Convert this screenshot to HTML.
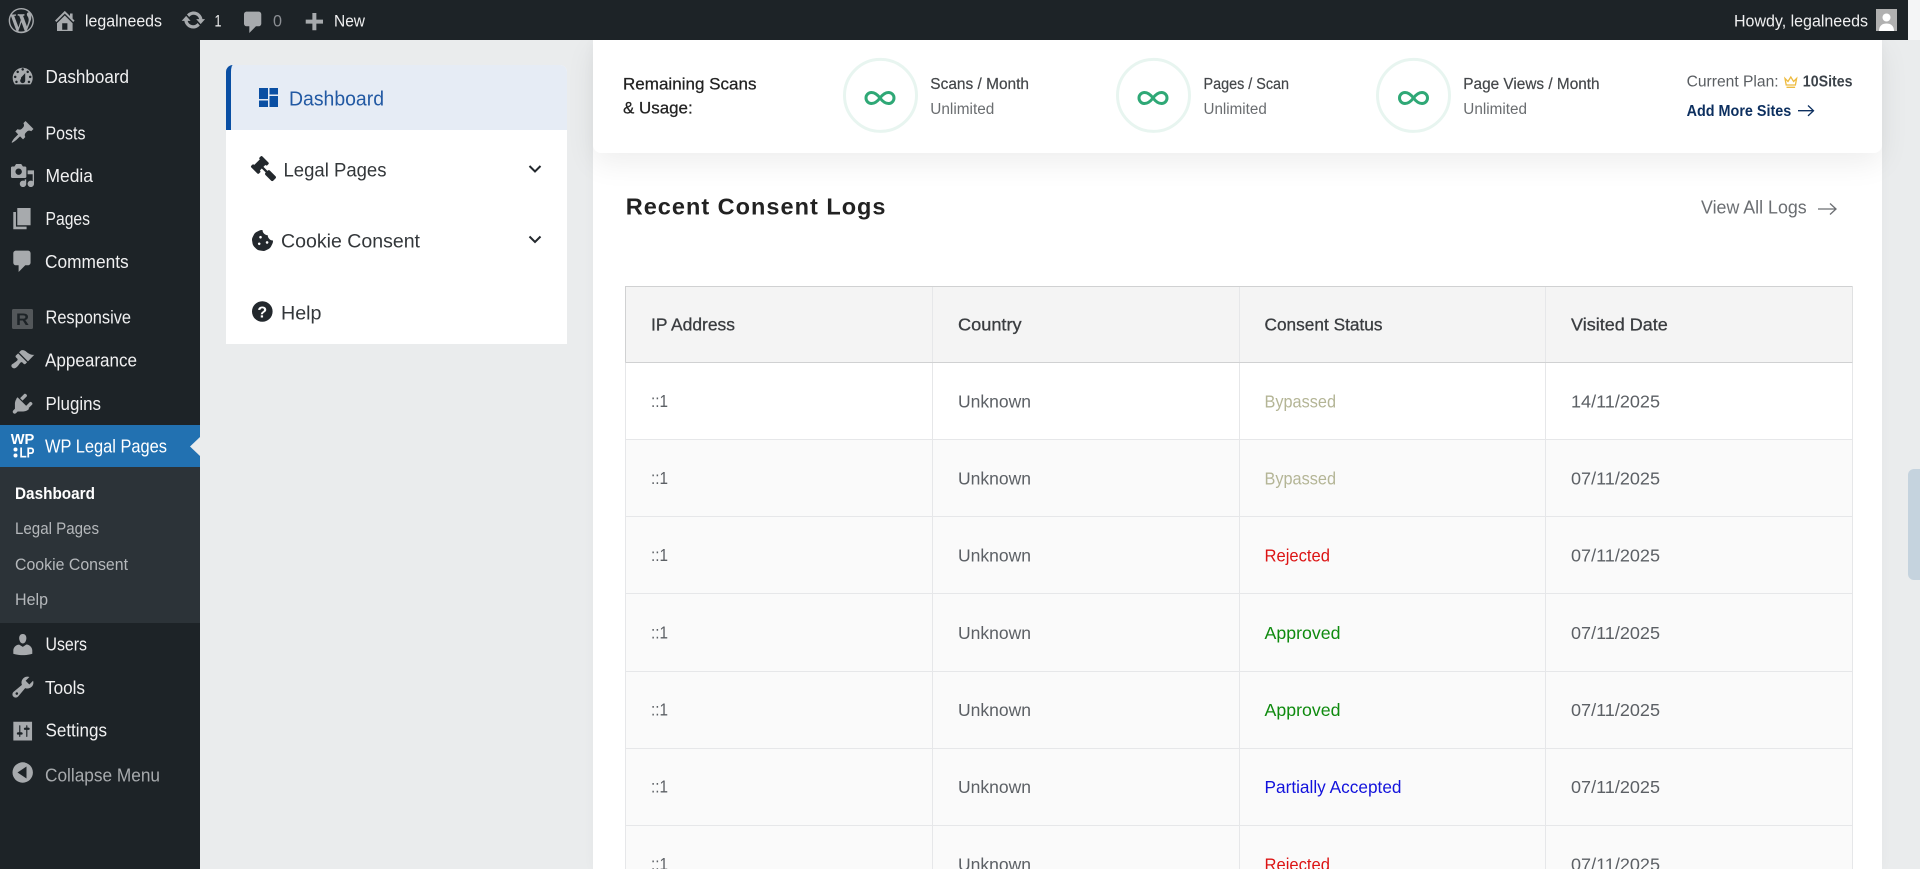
<!DOCTYPE html>
<html lang="en">
<head>
<meta charset="utf-8">
<title>WP Legal Pages Dashboard</title>
<style>
html,body{margin:0;padding:0;width:1920px;height:869px;overflow:hidden;background:#eaeced}
body{position:relative;font-family:"Liberation Sans",sans-serif}
.b{position:absolute}
svg{position:absolute;left:0;top:0}
text{font-family:"Liberation Sans",sans-serif;white-space:pre}
.s{font-size:18px;fill:#f0f0f1}
.t{font-size:16.500px;fill:#f0f0f1}
.c{font-size:17.500px;fill:#5c6065}
.h{font-size:17.500px;fill:#3a3d40;stroke:#3a3d40;stroke-width:.3px}
.n{font-size:19px;fill:#33373a}
.l{font-size:15.500px;fill:#44474a;stroke:#44474a;stroke-width:.2px}
.u{font-size:15.500px;fill:#6a6d70}
.k{font-size:17px;fill:#222;stroke:#222;stroke-width:.25px}
.i{fill:#a7aaad}
</style>
</head>
<body>
<div class="b" style="left:0;top:0;width:1908px;height:40px;background:#1d2327;z-index:3"></div>
<div class="b" style="left:1908px;top:0;width:12px;height:40px;background:#f4f5f6"></div>
<div class="b" style="left:0;top:40px;width:200px;height:829px;background:#1d2327"></div>
<div class="b" style="left:0;top:425px;width:200px;height:42px;background:#2271b1"></div>
<div class="b" style="left:0;top:467px;width:200px;height:156px;background:#2c3338"></div>
<div class="b" style="left:226px;top:65px;width:341px;height:279px;background:#fff;border-radius:7px 7px 0 0"></div>
<div class="b" style="left:226px;top:65px;width:336px;height:65px;background:#e6ecf5;border-left:5px solid #0a4fa3;border-radius:7px 7px 0 0"></div>
<div class="b" style="left:593px;top:40px;width:1289px;height:829px;background:#fff;box-shadow:0 0 12px rgba(0,0,0,.03)"></div>
<div class="b" style="left:593px;top:40px;width:1289px;height:113px;background:#fff;border-radius:0 0 8px 8px;box-shadow:0 10px 30px rgba(0,0,0,.07)"></div>
<div class="b" style="left:1908px;top:469px;width:12px;height:111px;background:#c5d3de;border-radius:6px 0 0 6px"></div>

<svg width="1920" height="869" viewBox="0 0 1920 869" style="z-index:4">
<!-- active menu arrow -->
<path d="M200 437l-10 9.500 10 9.500z" fill="#eaeced"/>

<!-- admin bar -->
<g class="i">
<path transform="translate(8.700 8) scale(1.260)" fill-rule="evenodd" d="M20 10c0-5.510-4.490-10-10-10C4.480 0 0 4.490 0 10c0 5.520 4.480 10 10 10 5.510 0 10-4.480 10-10zM7.780 15.370L4.370 6.220c.55-.02 1.170-.08 1.170-.08.5-.06.44-1.130-.06-1.110 0 0-1.450.11-2.370.11-.18 0-.37 0-.58-.01C4.120 2.690 6.870 1.090 10 1.090c2.330 0 4.450.87 6.050 2.340-.68-.11-1.650.39-1.650 1.580 0 .74.45 1.360.9 2.100.35.61.55 1.360.55 2.460 0 1.490-1.400 5-1.400 5l-3.030-8.350c.54-.02.82-.17.82-.17.5-.05.44-1.250-.06-1.220 0 0-1.440.12-2.380.12-.87 0-2.330-.12-2.330-.12-.5-.03-.56 1.200-.06 1.220l.92.08 1.260 3.410zM17.410 10c.24-.64.74-1.870.43-4.250.7 1.290 1.050 2.710 1.050 4.250 0 3.290-1.730 6.240-4.400 7.780.97-2.590 1.940-5.200 2.920-7.780zM6.100 18.090C3.120 16.650 1.110 13.530 1.110 10c0-1.300.23-2.480.72-3.590C3.250 10.300 4.670 14.200 6.100 18.090zm4.030-6.860l2.580 6.980c-.86.29-1.740.45-2.710.45-.82 0-1.620-.12-2.370-.34.85-2.380 1.670-4.740 2.500-7.090z"/>
<path transform="translate(51.800 7.600) scale(1.300)" fill-rule="evenodd" d="M16 8.500l1.530 1.530-1.060 1.060L10 4.620l-6.470 6.470-1.060-1.060L10 2.500l4 4v-2h2v4zm-6-2.460l6 5.990V18H4v-5.970zM12 17v-5H8v5h4z"/>
<path transform="translate(180.700 7.300) scale(1.270)" d="M10.200 3.280c3.530 0 6.430 2.610 6.920 6h2.080l-3.500 4-3.500-4h2.320c-.45-1.970-2.210-3.440-4.320-3.440-1.450 0-2.730.71-3.540 1.780L4.950 5.660C6.230 4.200 8.110 3.280 10.200 3.280zm-.4 13.440c-3.520 0-6.430-2.610-6.920-6H.8l3.500-4c1.170 1.330 2.330 2.670 3.500 4H5.480c.45 1.970 2.210 3.440 4.320 3.440 1.450 0 2.730-.71 3.540-1.780l1.710 1.950c-1.280 1.460-3.150 2.390-5.250 2.390z"/>
<path transform="translate(240 9) scale(1.330)" d="M5 2h9c1.100 0 2 .9 2 2v7c0 1.100-.9 2-2 2h-2l-5 5v-5H5c-1.100 0-2-.9-2-2V4c0-1.100.9-2 2-2z"/>
<path transform="translate(300.400 10.300) scale(1.330)" d="M17 7v3h-5v5H9v-5H4V7h5V2h3v5h5z"/>
</g>
<text class="t" x="85" y="26.500" textLength="77" lengthAdjust="spacingAndGlyphs">legalneeds</text>
<text class="t" x="214.500" y="26.500" textLength="7" lengthAdjust="spacingAndGlyphs">1</text>
<text class="t" x="273" y="26.500" style="fill:#8c8f94" textLength="9" lengthAdjust="spacingAndGlyphs">0</text>
<text class="t" x="334" y="26.500" textLength="31" lengthAdjust="spacingAndGlyphs">New</text>
<text class="t" x="1734" y="26.500" textLength="134" lengthAdjust="spacingAndGlyphs">Howdy, legalneeds</text>
<rect x="1876" y="9" width="21" height="22" fill="#b0b0b0"/>
<circle cx="1886.500" cy="17.500" r="4" fill="#fff"/>
<path d="M1879 31c0-5.500 3.500-7.500 7.500-7.500s7.500 2 7.500 7.500z" fill="#fff"/>

<!-- sidebar icons -->
<g class="i">
<path transform="translate(10.200 64.400) scale(1.250)" fill-rule="evenodd" d="M3.760 16h12.480c1.100-1.430 1.760-3.210 1.760-5.140 0-4.520-3.580-8.180-8-8.180s-8 3.660-8 8.180c0 1.930.66 3.710 1.760 5.140zM10 3c.55 0 1 .45 1 1s-.45 1-1 1-1-.45-1-1 .45-1 1-1zM6 5c.55 0 1 .45 1 1s-.45 1-1 1-1-.45-1-1 .45-1 1-1zm8 0c.55 0 1 .45 1 1s-.45 1-1 1-1-.45-1-1 .45-1 1-1zm-5.370 5.550L12 7v6c0 1.100-.9 2-2 2s-2-.9-2-2c0-.57.25-1.080.63-1.450zM4 9c.55 0 1 .45 1 1s-.45 1-1 1-1-.45-1-1 .45-1 1-1zm12 0c.55 0 1 .45 1 1s-.45 1-1 1-1-.45-1-1 .45-1 1-1zM5 13c.55 0 1 .45 1 1s-.45 1-1 1-1-.45-1-1 .45-1 1-1zm10 0c.55 0 1 .45 1 1s-.45 1-1 1-1-.45-1-1 .45-1 1-1z"/>
<path transform="translate(10.200 119.500) scale(1.250)" d="M10.440 3.020l1.820-1.820 6.360 6.350-1.830 1.820c-1.050-.68-2.480-.57-3.410.35l-.92.92c-.93.92-1.040 2.350-.35 3.400l-1.830 1.820-2.410-2.410-2.800 2.790c-.42.42-3.380 2.710-3.800 2.290s1.860-3.390 2.280-3.810l2.790-2.790L4.100 9.510l1.830-1.810c1.050.69 2.480.57 3.400-.35l.92-.92c.93-.92 1.040-2.350.35-3.410z"/>
<path transform="translate(9.700 162.700) scale(1.280)" fill-rule="evenodd" d="M13 11V4c0-.55-.45-1-1-1h-1.670L9 1H5L3.670 3H2c-.55 0-1 .45-1 1v7c0 .55.45 1 1 1h10c.55 0 1-.45 1-1zM7 4.500c1.380 0 2.500 1.120 2.500 2.500S8.380 9.500 7 9.500 4.500 8.380 4.500 7 5.620 4.500 7 4.500zM14 6h5v10.500c0 1.380-1.120 2.500-2.500 2.500S14 17.880 14 16.500s1.120-2.500 2.500-2.500c.54 0 1.040.17 1.450.46V9h-3.950zM8 13h4.900v3.500c0 1.380-1.120 2.500-2.500 2.500S7.900 17.880 7.900 16.500 9 14 10.400 14c.54 0 1 .17 1.300.4V13z"/>
<path transform="translate(9.300 205.300) scale(1.330)" d="M6 15V2h10v13H6zm-1 1h8v2H3V5h2v11z"/>
<path transform="translate(9.300 248) scale(1.330)" d="M5 2h9c1.100 0 2 .9 2 2v7c0 1.100-.9 2-2 2h-2l-5 5v-5H5c-1.100 0-2-.9-2-2V4c0-1.100.9-2 2-2z"/>
<path transform="translate(9.700 347.400) scale(1.260)" d="M14.480 11.060L7.410 3.990l1.500-1.500c.5-.56 2.300-.47 3.510.32 1.210.8 1.430 1.280 2.910 2.100 1.180.64 2.450 1.260 4.230.91zm-.71.71L6.700 4.700 4.930 6.470c-.39.39-.39 1.020 0 1.410l1.060 1.060c.39.39.39 1.030 0 1.420-.6.6-1.430 1.110-2.210 1.690-.35.26-.7.53-1.010.84C1.430 13.230.76 14.780 2 16c1.230 1.230 2.770.56 4.120-.8.3-.3.58-.65.84-1 .58-.78 1.090-1.610 1.690-2.210.39-.39 1.030-.39 1.420 0l1.060 1.060c.39.39 1.020.39 1.410 0z"/>
<path transform="translate(9.700 390.700) scale(1.300)" d="M13.110 4.360L9.870 7.600 8 5.730l3.240-3.240c.35-.34 1.050-.2 1.560.32.52.51.66 1.210.31 1.550zm-8 1.770l.91-1.120 9.010 9.010-1.190.84c-.71.71-2.630 1.160-3.820 1.160H6.140L4.900 17.260c-.59.59-1.540.59-2.120 0-.59-.58-.59-1.530 0-2.120l1.240-1.240v-3.880c0-1.130.52-3.010 1.180-3.680zm7.110 5.880l3.240-3.240c.35-.34 1.050-.2 1.560.32.51.51.66 1.210.31 1.550l-3.240 3.250z"/>
<path transform="translate(9.700 631.400) scale(1.310)" d="M10 9.250c-2.270 0-2.730-3.440-2.730-3.440C7 4.020 7.820 2 9.970 2c2.160 0 2.980 2.020 2.710 3.810 0 0-.41 3.440-2.680 3.440zm0 2.570L12.720 10c2.390 0 4.520 2.330 4.520 4.530v2.490s-3.650 1.130-7.240 1.130c-3.650 0-7.240-1.130-7.240-1.130v-2.490c0-2.250 1.940-4.480 4.470-4.480z"/>
<path transform="translate(9.800 674) scale(1.310)" fill-rule="evenodd" d="M16.680 9.770c-1.340 1.340-3.300 1.670-4.950.99l-5.410 6.520c-.99.99-2.590.99-3.570 0-.99-.98-.99-2.580 0-3.570l6.520-5.420c-.68-1.650-.35-3.610.99-4.950 1.280-1.280 3.120-1.620 4.720-1.060l-2.890 2.890 2.820 2.820 2.860-2.870c.53 1.580.18 3.390-1.090 4.650zM4.660 15.640c.39.39 1 .39 1.390 0 .39-.39.39-1 0-1.390-.39-.39-1-.39-1.390 0-.39.39-.39 1 0 1.390z"/>
<path transform="translate(11 719.400) scale(1.170)" fill-rule="evenodd" d="M18 18V2H2v16zM8 11h1c.55 0 1 .45 1 1s-.45 1-1 1H8v1.500c0 .28-.22.5-.5.5s-.5-.22-.5-.5V13H6c-.55 0-1-.45-1-1s.45-1 1-1h1V5.500c0-.28.22-.5.5-.5s.5.22.5.5V11zm5-2h-1c-.55 0-1-.45-1-1s.45-1 1-1h1V5.500c0-.28.22-.5.5-.5s.5.22.5.5V7h1c.55 0 1 .45 1 1s-.45 1-1 1h-1v5.500c0 .28-.22.5-.5.5s-.5-.22-.5-.5V9z"/>
<circle cx="22.700" cy="772.500" r="10.200"/>
</g>
<path d="M26.500 766.500v12l-9-6z" fill="#1d2327"/>
<rect x="12" y="309" width="21" height="20" rx="1.500" fill="#53575a"/>
<text x="16" y="325" font-size="17" font-weight="700" fill="#1d2327" textLength="13" lengthAdjust="spacingAndGlyphs">R</text>
<text x="10.700" y="444" font-size="15" font-weight="700" fill="#fff" textLength="23.600" lengthAdjust="spacingAndGlyphs">WP</text>
<text x="19.500" y="457.500" font-size="15" font-weight="700" fill="#fff" textLength="15" lengthAdjust="spacingAndGlyphs">LP</text>
<circle cx="15.500" cy="449.500" r="2" fill="#fff"/><circle cx="15.500" cy="455.500" r="2" fill="#fff"/>

<!-- sidebar labels -->
<text class="s" x="45.500" y="83" textLength="83.500" lengthAdjust="spacingAndGlyphs">Dashboard</text>
<text class="s" x="45.500" y="139.500" textLength="40" lengthAdjust="spacingAndGlyphs">Posts</text>
<text class="s" x="45.500" y="182" textLength="47.500" lengthAdjust="spacingAndGlyphs">Media</text>
<text class="s" x="45.500" y="225" textLength="44.500" lengthAdjust="spacingAndGlyphs">Pages</text>
<text class="s" x="45" y="268" textLength="83.700" lengthAdjust="spacingAndGlyphs">Comments</text>
<text class="s" x="45.500" y="323.500" textLength="85.500" lengthAdjust="spacingAndGlyphs">Responsive</text>
<text class="s" x="45" y="366.600" textLength="92" lengthAdjust="spacingAndGlyphs">Appearance</text>
<text class="s" x="45.500" y="410" textLength="55.500" lengthAdjust="spacingAndGlyphs">Plugins</text>
<text class="s" x="45" y="452.700" style="fill:#fff" textLength="122" lengthAdjust="spacingAndGlyphs">WP Legal Pages</text>
<text class="t" x="15" y="499" style="fill:#fff;font-weight:700" textLength="80" lengthAdjust="spacingAndGlyphs">Dashboard</text>
<text class="t" x="15" y="534" style="fill:#b5b8bb" textLength="84" lengthAdjust="spacingAndGlyphs">Legal Pages</text>
<text class="t" x="15" y="570" style="fill:#b5b8bb" textLength="113" lengthAdjust="spacingAndGlyphs">Cookie Consent</text>
<text class="t" x="15" y="605" style="fill:#b5b8bb" textLength="33" lengthAdjust="spacingAndGlyphs">Help</text>
<text class="s" x="45.500" y="650.700" textLength="41.500" lengthAdjust="spacingAndGlyphs">Users</text>
<text class="s" x="45" y="694" textLength="40" lengthAdjust="spacingAndGlyphs">Tools</text>
<text class="s" x="45.500" y="736.700" textLength="61.500" lengthAdjust="spacingAndGlyphs">Settings</text>
<text class="s" x="45" y="781.700" style="fill:#a7aaad" textLength="115" lengthAdjust="spacingAndGlyphs">Collapse Menu</text>

<!-- plugin nav -->
<g fill="#0a4fa3">
<rect x="259" y="88" width="9" height="11"/><rect x="259" y="100.500" width="9" height="6.500"/>
<rect x="269.500" y="88" width="8.500" height="6.500"/><rect x="269.500" y="96" width="8.500" height="11"/>
</g>
<text x="289" y="105.700" font-size="20" fill="#2259a3" textLength="95" lengthAdjust="spacingAndGlyphs">Dashboard</text>
<g fill="#23282d">
<path transform="translate(276 156) scale(-.049 .049)" d="M504.971 199.362l-22.627-22.627c-9.373-9.373-24.569-9.373-33.941 0l-5.657 5.657L329.608 69.255l5.657-5.657c9.373-9.373 9.373-24.569 0-33.941L312.638 7.029c-9.373-9.373-24.569-9.373-33.941 0L154.246 131.480c-9.373 9.373-9.373 24.569 0 33.941l22.627 22.627c9.373 9.373 24.569 9.373 33.941 0l5.657-5.657 39.598 39.598-81.040 81.040-5.657-5.657c-12.497-12.497-32.758-12.497-45.255 0L9.373 412.118c-12.497 12.497-12.497 32.758 0 45.255l45.255 45.255c12.497 12.497 32.758 12.497 45.255 0l114.745-114.745c12.497-12.497 12.497-32.758 0-45.255l-5.657-5.657 81.040-81.040 39.598 39.598-5.657 5.657c-9.373 9.373-9.373 24.569 0 33.941l22.627 22.627c9.373 9.373 24.569 9.373 33.941 0l124.451-124.451c9.372-9.372 9.372-24.568 0-33.941z"/>
<path transform="translate(252 230) scale(.041)" fill-rule="evenodd" d="M510.520 255.820c-69.970-.85-126.470-57.690-126.470-127.860-70.170 0-127-56.490-127.860-126.450-27.260-4.140-55.130.3-79.720 12.820l-69.130 35.220a132.221 132.221 0 0 0-57.790 57.810l-35.100 68.880a132.645 132.645 0 0 0-12.820 80.950l12.080 76.270a132.521 132.521 0 0 0 37.160 72.960l54.770 54.760a132.036 132.036 0 0 0 72.710 37.060l76.710 12.150c27.510 4.360 55.700-.11 80.530-12.760l69.130-35.210a132.273 132.273 0 0 0 57.790-57.810l35.100-68.880c12.560-24.640 17.010-52.580 12.910-79.910zM176 368c-17.670 0-32-14.330-32-32s14.330-32 32-32 32 14.330 32 32-14.330 32-32 32zm32-160c-17.670 0-32-14.330-32-32s14.330-32 32-32 32 14.330 32 32-14.330 32-32 32zm160 128c-17.670 0-32-14.330-32-32s14.330-32 32-32 32 14.330 32 32-14.330 32-32 32z"/>
<circle cx="262.300" cy="311.500" r="10.300"/>
</g>
<text x="262.300" y="317.500" font-size="16" font-weight="700" fill="#fff" text-anchor="middle">?</text>
<text class="n" x="283.500" y="176.700" textLength="103" lengthAdjust="spacingAndGlyphs">Legal Pages</text>
<text class="n" x="281" y="247.700" textLength="139" lengthAdjust="spacingAndGlyphs">Cookie Consent</text>
<text class="n" x="281" y="319.300" textLength="40.500" lengthAdjust="spacingAndGlyphs">Help</text>
<path d="M529.500 166l5.500 5.500 5.500-5.500M529.500 236.500l5.500 5.500 5.500-5.500" fill="none" stroke="#23282d" stroke-width="2"/>

<!-- usage card -->
<text class="k" x="623" y="89.700" textLength="133.500" lengthAdjust="spacingAndGlyphs">Remaining Scans</text>
<text class="k" x="623" y="113.700" textLength="69.700" lengthAdjust="spacingAndGlyphs">&amp; Usage:</text>
<g fill="none" stroke="#e8f5f0" stroke-width="3">
<circle cx="880.500" cy="95.400" r="36"/><circle cx="1153.500" cy="95.400" r="36"/><circle cx="1413.500" cy="95.400" r="36"/>
</g>
<g fill="none" stroke="#2fa876" stroke-width="3">
<path d="M880 98c-3-4-5.500-5.500-8.500-5.500a5.500 5.500 0 0 0 0 11c3 0 5.500-1.500 8.500-5.500s5.500-5.500 8.500-5.500a5.500 5.500 0 0 1 0 11c-3 0-5.500-1.500-8.500-5.500z"/>
<path d="M1153 98c-3-4-5.500-5.500-8.500-5.500a5.500 5.500 0 0 0 0 11c3 0 5.500-1.500 8.500-5.500s5.500-5.500 8.500-5.500a5.500 5.500 0 0 1 0 11c-3 0-5.500-1.500-8.500-5.500z"/>
<path d="M1413.500 98c-3-4-5.500-5.500-8.500-5.500a5.500 5.500 0 0 0 0 11c3 0 5.500-1.500 8.500-5.500s5.500-5.500 8.500-5.500a5.500 5.500 0 0 1 0 11c-3 0-5.500-1.500-8.500-5.500z"/>
</g>
<text class="l" x="930.300" y="89" textLength="98.700" lengthAdjust="spacingAndGlyphs">Scans / Month</text>
<text class="u" x="930.300" y="114" textLength="64" lengthAdjust="spacingAndGlyphs">Unlimited</text>
<text class="l" x="1203.500" y="89" textLength="85.500" lengthAdjust="spacingAndGlyphs">Pages / Scan</text>
<text class="u" x="1203.500" y="114" textLength="63.300" lengthAdjust="spacingAndGlyphs">Unlimited</text>
<text class="l" x="1463.300" y="89" textLength="136.300" lengthAdjust="spacingAndGlyphs">Page Views / Month</text>
<text class="u" x="1463.300" y="114" textLength="63.700" lengthAdjust="spacingAndGlyphs">Unlimited</text>
<text x="1686.600" y="86.500" font-size="15.500" fill="#5a5e62" textLength="92" lengthAdjust="spacingAndGlyphs">Current Plan:</text>
<path d="M1785 78.500l3 3 2.800-4.500 2.800 4.500 3-3-1.200 6.500h-9.200zM1786.500 87.300h8.600" fill="none" stroke="#eebb3f" stroke-width="1.300"/>
<text x="1802.800" y="86.500" font-size="15.500" font-weight="700" fill="#3c434a" textLength="49.800" lengthAdjust="spacingAndGlyphs">10Sites</text>
<text x="1686.600" y="116" font-size="15.500" font-weight="700" fill="#0c2f5f" textLength="104.700" lengthAdjust="spacingAndGlyphs">Add More Sites</text>
<path d="M1798 110.700h15M1808 105.500l5.500 5.200-5.500 5.200" fill="none" stroke="#0c2f5f" stroke-width="1.300"/>

<!-- logs heading -->
<text x="625.700" y="214.300" font-size="23.500" font-weight="700" fill="#222" textLength="259.800" lengthAdjust="spacing">Recent Consent Logs</text>
<text x="1701" y="213.300" font-size="18.500" fill="#6b6e72" textLength="105.700" lengthAdjust="spacingAndGlyphs">View All Logs</text>
<path d="M1818 209h18M1830 203.500l6 5.500-6 5.500" fill="none" stroke="#6b6e72" stroke-width="1.300"/>

<!-- table -->
<rect x="625.500" y="286.500" width="1227" height="76" fill="#f4f4f4"/>
<rect x="625.500" y="439.500" width="1227" height="430" fill="#fafafa"/>
<g stroke="#e6e7e9" stroke-width="1" fill="none">
<path d="M932.500 286v583M1239.500 286v583M1545.500 286v583M1852.500 362v507M625.500 362v507"/>
<path d="M625 439.500h1228M625 516.500h1228M625 593.500h1228M625 671.500h1228M625 748.500h1228M625 825.500h1228"/>
</g>
<path d="M625.500 362.500v-76h1227M625.500 362.500h1227" fill="none" stroke="#d0d1d2" stroke-width="1"/>
<path d="M1852.500 286v76" stroke="#e0e1e2" stroke-width="1"/>

<g transform="translate(0 -.7)">
<text class="h" x="651" y="331" textLength="84" lengthAdjust="spacingAndGlyphs">IP Address</text>
<text class="h" x="958" y="331" textLength="63.600" lengthAdjust="spacingAndGlyphs">Country</text>
<text class="h" x="1264.500" y="331" textLength="118" lengthAdjust="spacingAndGlyphs">Consent Status</text>
<text class="h" x="1571" y="331" textLength="96.800" lengthAdjust="spacingAndGlyphs">Visited Date</text>

<text class="c" x="651" y="407.500" textLength="17" lengthAdjust="spacingAndGlyphs">::1</text>
<text class="c" x="958" y="408" textLength="73" lengthAdjust="spacingAndGlyphs">Unknown</text>
<text class="c" x="1264.500" y="408" style="fill:#b4b596" textLength="71.500" lengthAdjust="spacingAndGlyphs">Bypassed</text>
<text class="c" x="1571" y="408" textLength="89" lengthAdjust="spacingAndGlyphs">14/11/2025</text>

<text class="c" x="651" y="484.700" textLength="17" lengthAdjust="spacingAndGlyphs">::1</text>
<text class="c" x="958" y="485.200" textLength="73" lengthAdjust="spacingAndGlyphs">Unknown</text>
<text class="c" x="1264.500" y="485.200" style="fill:#b4b596" textLength="71.500" lengthAdjust="spacingAndGlyphs">Bypassed</text>
<text class="c" x="1571" y="485.200" textLength="89" lengthAdjust="spacingAndGlyphs">07/11/2025</text>

<text class="c" x="651" y="561.800" textLength="17" lengthAdjust="spacingAndGlyphs">::1</text>
<text class="c" x="958" y="562.300" textLength="73" lengthAdjust="spacingAndGlyphs">Unknown</text>
<text class="c" x="1264.500" y="562.300" style="fill:#dc1414" textLength="65.500" lengthAdjust="spacingAndGlyphs">Rejected</text>
<text class="c" x="1571" y="562.300" textLength="89" lengthAdjust="spacingAndGlyphs">07/11/2025</text>

<text class="c" x="651" y="639" textLength="17" lengthAdjust="spacingAndGlyphs">::1</text>
<text class="c" x="958" y="639.500" textLength="73" lengthAdjust="spacingAndGlyphs">Unknown</text>
<text class="c" x="1264.500" y="639.500" style="fill:#0e8a0e" textLength="76" lengthAdjust="spacingAndGlyphs">Approved</text>
<text class="c" x="1571" y="639.500" textLength="89" lengthAdjust="spacingAndGlyphs">07/11/2025</text>

<text class="c" x="651" y="716.200" textLength="17" lengthAdjust="spacingAndGlyphs">::1</text>
<text class="c" x="958" y="716.700" textLength="73" lengthAdjust="spacingAndGlyphs">Unknown</text>
<text class="c" x="1264.500" y="716.700" style="fill:#0e8a0e" textLength="76" lengthAdjust="spacingAndGlyphs">Approved</text>
<text class="c" x="1571" y="716.700" textLength="89" lengthAdjust="spacingAndGlyphs">07/11/2025</text>

<text class="c" x="651" y="793.400" textLength="17" lengthAdjust="spacingAndGlyphs">::1</text>
<text class="c" x="958" y="793.900" textLength="73" lengthAdjust="spacingAndGlyphs">Unknown</text>
<text class="c" x="1264.500" y="793.900" style="fill:#1212dc" textLength="137" lengthAdjust="spacingAndGlyphs">Partially Accepted</text>
<text class="c" x="1571" y="793.900" textLength="89" lengthAdjust="spacingAndGlyphs">07/11/2025</text>

<text class="c" x="651" y="870.500" textLength="17" lengthAdjust="spacingAndGlyphs">::1</text>
<text class="c" x="958" y="871" textLength="73" lengthAdjust="spacingAndGlyphs">Unknown</text>
<text class="c" x="1264.500" y="871" style="fill:#dc1414" textLength="65.500" lengthAdjust="spacingAndGlyphs">Rejected</text>
<text class="c" x="1571" y="871" textLength="89" lengthAdjust="spacingAndGlyphs">07/11/2025</text>
</g>
</svg>
</body>
</html>
